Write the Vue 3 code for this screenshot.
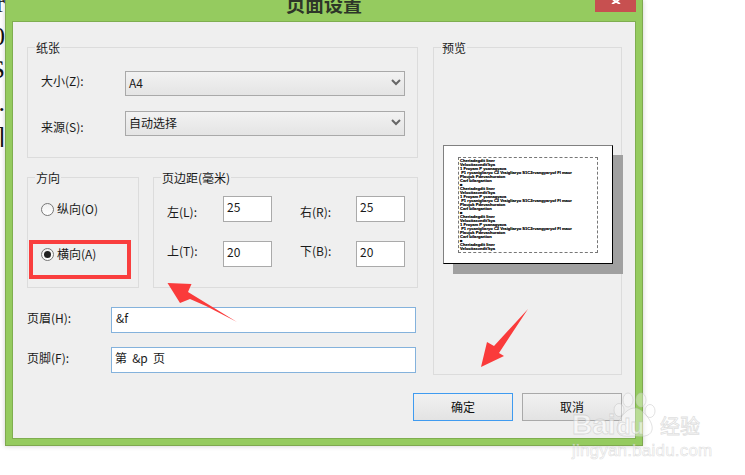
<script setup>
const gutter = ['r', '0', 'S', '.', ']']
const block = [
  'Cheriadegdit liner',
  'Velocitasvedit\'kya',
  '1 Froyam P ycanagyava',
  '\u00a0P1 rycanigliaryo C2 Vraigliaryo S1C2rvangyaryof Fl maur',
  'Plaujuk Pdevashuraton',
  'Carf bilargartion',
  '■',
]
const previewLines = [...block, ...block, ...block, block[0], block[1]]
</script>

<template>
  <div class="page">
    <div class="gutter">
      <span v-for="(g, i) in gutter" :key="i">{{ g }}</span>
    </div>

    <div class="window">
      <div class="titlebar">
        <span></span>
        <div class="title">页面设置</div>
        <div class="close">
          <svg width="12" height="4" viewBox="0 0 12 4"><path d="M1.5 -2 L6 2 L10.5 -2 M2 4 L6 1.5 L10 4" fill="none" stroke="#fff" stroke-width="2"/></svg>
        </div>
      </div>

      <div class="body">
        <div class="main">
          <div class="left">
            <section class="group paper">
              <div class="legend">纸张</div>
              <div class="label">大小(Z):</div>
              <div class="select">
                <span>A4</span>
                <svg width="10" height="7" viewBox="0 0 10 7"><path d="M1 1 L5 5 L9 1" fill="none" stroke="#666" stroke-width="2"/></svg>
              </div>
              <div class="label low">来源(S):</div>
              <div class="select">
                <span>自动选择</span>
                <svg width="10" height="7" viewBox="0 0 10 7"><path d="M1 1 L5 5 L9 1" fill="none" stroke="#666" stroke-width="2"/></svg>
              </div>
            </section>

            <div class="mid">
              <section class="group orient">
                <div class="legend">方向</div>
                <div class="radio"><i class="dot"></i><span>纵向(O)</span></div>
                <div class="radio"><i class="dot on"></i><span>横向(A)</span></div>
              </section>

              <section class="group margins">
                <div class="legend">页边距(毫米)</div>
                <div class="label down">左(L):</div>
                <div class="field">25</div>
                <div class="label down far">右(R):</div>
                <div class="field">25</div>
                <div class="label up">上(T):</div>
                <div class="field">20</div>
                <div class="label up far">下(B):</div>
                <div class="field">20</div>
              </section>
            </div>

            <div class="hf">
              <div class="label">页眉(H):</div>
              <div class="hf-input">&amp;f</div>
              <div class="label">页脚(F):</div>
              <div class="hf-input spaced">第 &amp;p 页</div>
            </div>
          </div>

          <section class="group preview">
            <div class="legend">预览</div>
            <div class="sheet">
              <div class="dashed">
                <div v-for="(l, i) in previewLines" :key="i" class="pline">{{ l }}</div>
              </div>
            </div>
          </section>
        </div>

        <div class="actions">
          <div class="btn primary">确定</div>
          <div class="btn">取消</div>
        </div>
      </div>
    </div>

    <svg class="marks" width="745" height="475" viewBox="0 0 745 475">
      <rect x="31" y="242" width="98" height="35" fill="none" stroke="#f93e3e" stroke-width="4"/>
      <polygon points="167.5,283 191.5,284 188,292 237,322 206,306 190,299 180,303" fill="#fa3b3b"/>
      <polygon points="481,367 504,356 499,353 528,309 494,346 487,342" fill="#fa3b3b"/>
    </svg>

    <div class="wm">
      <svg class="paw" width="56" height="56" viewBox="0 0 56 56">
        <g fill="rgba(255,255,255,.35)" stroke="rgba(190,190,190,.45)" stroke-width="1">
          <ellipse cx="11" cy="18" rx="5" ry="6.5"/>
          <ellipse cx="20" cy="8" rx="5" ry="7"/>
          <ellipse cx="33" cy="8" rx="5" ry="7"/>
          <ellipse cx="42" cy="19" rx="5" ry="6.5"/>
          <path d="M26 16 C34 16 46 30 44 38 C42 46 32 44 26 44 C20 44 10 46 9 38 C8 30 18 16 26 16 Z"/>
        </g>
      </svg>
      <div class="wm-top">
        <span class="wm-bai">Bai</span><span class="wm-du">du</span><span class="wm-cn">经验</span>
      </div>
      <div class="wm-url">jingyan.baidu.com</div>
    </div>
  </div>
</template>

<style>
html, body { margin: 0; background: #fff; }
</style>

<style scoped>
.page {
  position: relative;
  width: 745px;
  height: 475px;
  overflow: hidden;
  display: flex;
  align-items: flex-start;
  background: #fff;
  font-family: "Noto Sans CJK SC", "Noto Sans", sans-serif;
  font-size: 12px;
  color: #1a1a1a;
}
.gutter {
  width: 5px;
  height: 160px;
  overflow: hidden;
  display: flex;
  flex-direction: column;
  align-items: flex-end;
  font-family: "Liberation Serif", serif;
  font-size: 26px;
  line-height: 33px;
  margin-top: -13px;
  color: #111;
  flex: none;
}
.window {
  width: 638px;
  height: 446px;
  box-sizing: border-box;
  flex: none;
  display: flex;
  flex-direction: column;
  background: #95cb5f;
  border: 1px solid #7fa850;
  border-top: 0;
  padding: 0 6px 6px;
  box-shadow: 0 0 5px rgba(0, 0, 0, 0.2);
}
.titlebar {
  height: 21px;
  flex: none;
  display: grid;
  grid-template-columns: 1fr auto 1fr;
  overflow: hidden;
}
.title {
  font-size: 19px;
  font-weight: 700;
  line-height: 19px;
  margin-top: -6px;
  color: #2d3528;
}
.close {
  justify-self: end;
  width: 41px;
  height: 12px;
  background: #c75050;
  display: flex;
  justify-content: center;
  align-items: flex-start;
}
.close svg { display: block; }
.body {
  flex: 1;
  box-sizing: border-box;
  background: #efefef;
  border: 1px solid #7fae50;
  padding: 25px 13px 0 14px;
}
.main {
  display: grid;
  grid-template-columns: 391px 189px;
  column-gap: 15px;
  height: 328px;
}
.left {
  display: flex;
  flex-direction: column;
}
.group {
  position: relative;
  box-sizing: border-box;
  border: 1px solid #dcdcdc;
}
.legend {
  position: absolute;
  left: 7px;
  top: -9px;
  padding: 0 1px;
  line-height: 17px;
  background: #efefef;
  white-space: nowrap;
}
.label {
  line-height: 17px;
  white-space: nowrap;
}
.paper {
  height: 111px;
  padding: 23px 0 0 13px;
  display: grid;
  grid-template-columns: 84px 280px;
  grid-template-rows: 25px 25px;
  row-gap: 15px;
  align-items: center;
}
.paper .label { margin-top: -6px; }
.paper .label.low { margin-top: 5px; }
.select {
  box-sizing: border-box;
  height: 25px;
  border: 1px solid #a9a9a9;
  background: linear-gradient(#f2f2f2, #e4e4e4);
  display: flex;
  align-items: center;
  justify-content: space-between;
  padding: 0 3px 2px;
  line-height: 21px;
}
.mid {
  display: grid;
  grid-template-columns: 112px 265px;
  column-gap: 14px;
  margin-top: 19px;
}
.orient {
  height: 111px;
  padding: 23px 0 0 13px;
  display: flex;
  flex-direction: column;
  gap: 29px;
}
.radio {
  height: 16px;
  display: flex;
  align-items: center;
  gap: 3px;
  line-height: 16px;
}
.dot {
  box-sizing: border-box;
  width: 13px;
  height: 13px;
  border: 1px solid #777;
  border-radius: 50%;
  background: linear-gradient(#f0f0f0, #fff);
  display: flex;
  align-items: center;
  justify-content: center;
}
.dot.on::after {
  content: "";
  width: 7px;
  height: 7px;
  border-radius: 50%;
  background: #222;
}
.margins {
  height: 111px;
  padding: 18px 0 0 13px;
  display: grid;
  grid-template-columns: 56px 49px 84px 49px;
  grid-template-rows: 26px 26px;
  row-gap: 19px;
  align-items: center;
}
.margins .label.down { margin-top: 4px; }
.margins .label.up { margin-top: -8px; }
.margins .label.far { padding-left: 28px; }
.field {
  box-sizing: border-box;
  height: 26px;
  border: 1px solid #aaa;
  background: #fff;
  padding-left: 3px;
  line-height: 20px;
}
.hf {
  display: grid;
  grid-template-columns: 84px 305px;
  grid-template-rows: 26px 26px;
  row-gap: 14px;
  margin-top: 19px;
  align-items: center;
}
.hf .label { margin-top: -6px; }
.hf-input {
  box-sizing: border-box;
  height: 26px;
  border: 1px solid #84b2dc;
  background: #fff;
  padding-left: 4px;
  line-height: 20px;
}
.hf-input.spaced {
  padding-left: 3px;
  word-spacing: 2.5px;
}
.preview {
  height: 328px;
  padding: 97px 0 0 9px;
}
.sheet {
  box-sizing: border-box;
  width: 170px;
  height: 119px;
  background: #fff;
  border-top: 1px solid #808080;
  border-left: 1px solid #808080;
  border-right: 1px solid #000;
  border-bottom: 1px solid #000;
  box-shadow: 10px 10px 0 #a0a0a0;
  padding: 11px 0 0 14px;
}
.dashed {
  box-sizing: border-box;
  width: 140px;
  height: 96px;
  border: 1px dashed #777;
  padding: 1px 0 0 1px;
  overflow: hidden;
}
.pline {
  font-family: "Liberation Sans", sans-serif;
  font-size: 4.1px;
  font-weight: 700;
  line-height: 4px;
  height: 4px;
  color: #111;
  text-shadow: 0 0 0.3px #333;
  white-space: nowrap;
}
.actions {
  display: flex;
  justify-content: flex-end;
  gap: 9px;
  margin-top: 18px;
}
.btn {
  box-sizing: border-box;
  width: 100px;
  height: 28px;
  border: 1px solid #a9a9a9;
  background: linear-gradient(#f1f1f1, #e3e3e3);
  display: flex;
  align-items: center;
  justify-content: center;
  padding-bottom: 2px;
  color: #111;
}
.btn.primary { border-color: #3f9bf0; }
.marks {
  position: absolute;
  left: 0;
  top: 0;
  pointer-events: none;
}
.wm {
  position: absolute;
  left: 572px;
  top: 392px;
  width: 140px;
  height: 70px;
  pointer-events: none;
}
.paw {
  position: absolute;
  left: 36px;
  top: 0;
}
.wm-top {
  position: absolute;
  left: 0;
  top: 21px;
  display: flex;
  align-items: baseline;
  line-height: 24px;
  font-family: "Liberation Sans", sans-serif;
  font-weight: 700;
  color: rgba(255, 255, 255, 0.55);
  -webkit-text-stroke: 0.8px rgba(190, 190, 190, 0.5);
}
.wm-bai { font-size: 28px; width: 45px; }
.wm-du { font-size: 22px; width: 43px; }
.wm-cn {
  font-family: "Noto Sans CJK SC", sans-serif;
  font-size: 20px;
  font-weight: 400;
}
.wm-url {
  position: absolute;
  left: 0;
  top: 49px;
  font-family: "Liberation Sans", sans-serif;
  font-size: 17px;
  line-height: 20px;
  letter-spacing: 0.2px;
  color: rgba(255, 255, 255, 0.55);
  -webkit-text-stroke: 0.6px rgba(190, 190, 190, 0.5);
  white-space: nowrap;
}
</style>
